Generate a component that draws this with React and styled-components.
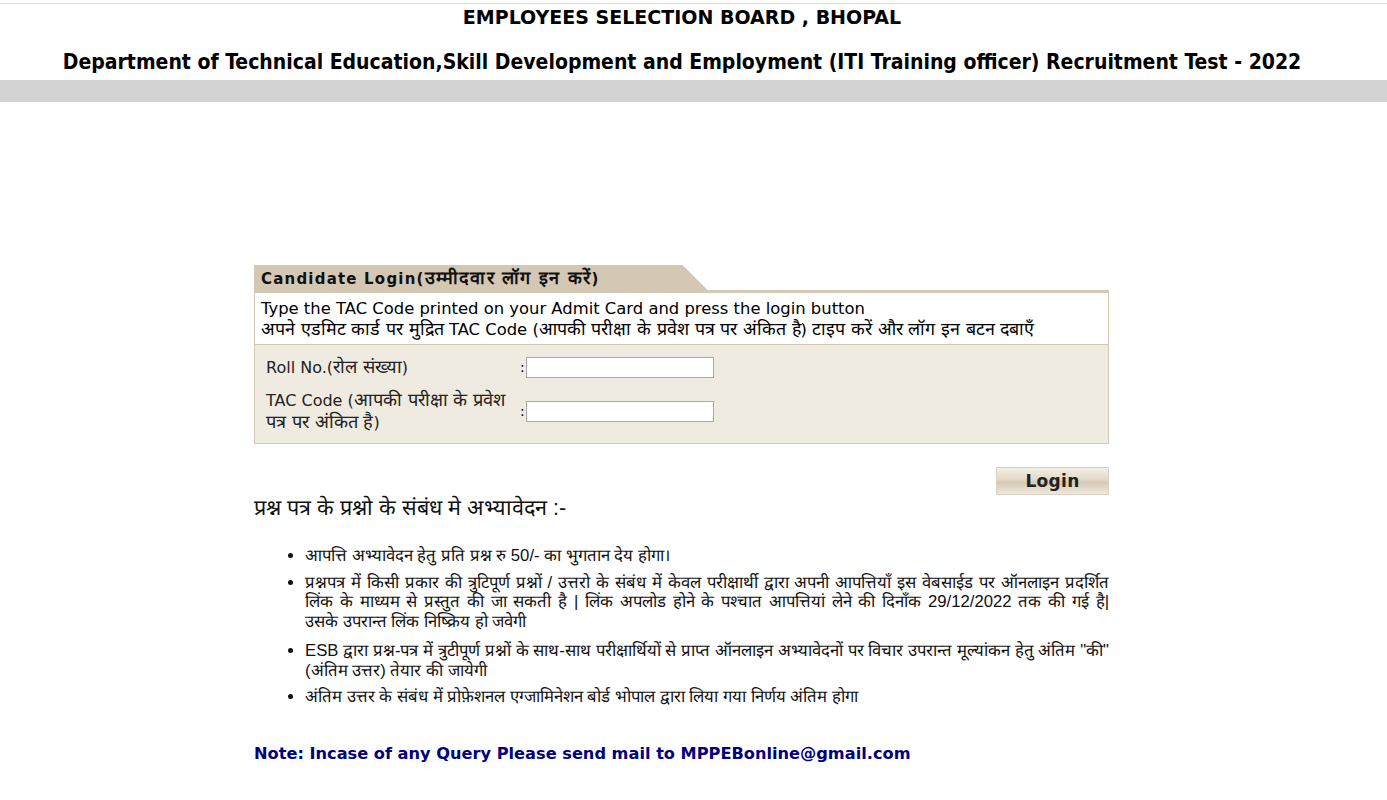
import styled, { createGlobalStyle } from "styled-components";

const Global = createGlobalStyle`
  body {
    margin: 0;
    background: #fff;
    font-family: "DejaVu Sans", Verdana, sans-serif;
    color: #000;
  }
`;

const Header = styled.div`
  margin-top: 3px;
  border-top: 1px solid #dcdcdc;
  padding-right: 23px;
  text-align: center;
  font-weight: bold;
`;

const BoardTitle = styled.div`
  font-family: "DejaVu Sans", Verdana, sans-serif;
  font-size: 19px;
  line-height: 22px;
  padding-top: 2px;
`;

const TestTitle = styled.div`
  font-family: "DejaVu Sans Condensed", Tahoma, sans-serif;
  font-size: 21px;
  line-height: 24px;
  margin-top: 22px;
  padding-bottom: 6px;
`;

const GreyBar = styled.div`
  height: 22px;
  background: #d3d3d3;
`;

const Main = styled.div`
  width: 855px;
  margin: 163px 0 0 254px;
`;

const Hi = styled.span`
  font-size: ${(p) => p.$scale || 1.09}em;
`;

const Tab = styled.div`
  display: flex;
  height: 25px;
`;

const TabLabel = styled.div`
  background: #d4c8b4;
  width: 428px;
  padding-left: 7px;
  box-sizing: border-box;
  font-size: 15px;
  font-weight: bold;
  letter-spacing: 1.2px;
  line-height: 25px;
  color: #111;
  white-space: nowrap;
`;

const TabSlant = styled.div`
  width: 25px;
  background: linear-gradient(to top right, #d4c8b4 50%, transparent 51%);
`;

const Panel = styled.div`
  border: 1px solid #d4c8b4;
  border-top: 3px solid #d4c8b4;
`;

const Intro = styled.div`
  background: #fff;
  padding: 6px 6px 4px;
  font-size: 16.4px;
  line-height: 20px;
  border-bottom: 1px solid #d4c8b4;
`;

const Form = styled.div`
  background: #f0ebe0;
  padding: 7px 11px 10px;
  display: grid;
  grid-template-columns: 254px 1fr;
  row-gap: 7px;
`;

const Label = styled.div`
  font-size: 16px;
  line-height: 21px;
  color: #222;
  display: flex;
  align-items: center;
  min-height: 30px;
`;

const Field = styled.div`
  display: flex;
  align-items: center;
  font-size: 14px;
  gap: 1px;
`;

const Input = styled.input`
  width: 188px;
  height: 21px;
  box-sizing: border-box;
  border: 1px solid #a9a9a9;
  background: #fff;
  margin: 0;
`;

const ButtonRow = styled.div`
  display: flex;
  justify-content: flex-end;
  margin-top: 23px;
`;

const LoginButton = styled.button`
  width: 113px;
  height: 28px;
  border: 1px solid #d8d0c0;
  background: linear-gradient(to bottom, #f3efe6 0%, #e2d8c6 45%, #d6cab4 55%, #eee8dc 100%);
  font-family: "DejaVu Sans", Verdana, sans-serif;
  font-size: 17px;
  font-weight: bold;
  letter-spacing: 0.3px;
  color: #222;
  padding: 0;
`;

const NoticeTitle = styled.div`
  font-family: "Liberation Sans", Arial, sans-serif;
  font-size: 21.6px;
  margin-top: -3px;
  color: #111;
`;

const NoticeList = styled.ul`
  margin: 25px 0 0;
  padding-left: 51px;
  font-family: "Liberation Sans", Arial, sans-serif;
  font-size: 16.7px;
  line-height: 19.5px;
  color: #111;
`;

const Item = styled.li`
  text-align: justify;
  margin-bottom: ${(p) => (p.$gap ? "10px" : "7px")};
`;

// a full line of a justified paragraph, kept at the same break as the original page
const FullLine = styled.span`
  display: block;
  text-align: justify;
  text-align-last: justify;
`;

const Note = styled.div`
  margin-top: 37px;
  font-family: "DejaVu Sans", Tahoma, sans-serif;
  font-weight: bold;
  font-size: 16.2px;
  color: #000080;
`;

const items = [
  { lines: ["आपत्ति अभ्यावेदन हेतु प्रति प्रश्न रु 50/- का भुगतान देय होगा।"] },
  {
    lines: [
      "प्रश्नपत्र में किसी प्रकार की त्रुटिपूर्ण प्रश्नों / उत्तरो के संबंध में केवल परीक्षार्थी द्वारा अपनी आपत्तियाँ इस वेबसाईड पर ऑनलाइन प्रदर्शित",
      "लिंक के माध्यम से प्रस्तुत की जा सकती है | लिंक अपलोड होने के पश्चात आपत्तियां लेने की दिनाँक 29/12/2022 तक की गई है|",
      "उसके उपरान्त लिंक निष्क्रिय हो जवेगी",
    ],
    gap: true,
  },
  {
    lines: [
      'ESB द्वारा प्रश्न-पत्र में त्रुटीपूर्ण प्रश्नों के साथ-साथ परीक्षार्थियों से प्राप्त ऑनलाइन अभ्यावेदनों पर विचार उपरान्त मूल्यांकन हेतु अंतिम "की" (अंतिम उत्तर) तेयार की जायेगी',
    ],
  },
  { lines: ["अंतिम उत्तर के संबंध में प्रोफ़ेशनल एग्जामिनेशन बोर्ड भोपाल द्वारा लिया गया निर्णय अंतिम होगा"] },
];

export default function App() {
  return (
    <>
      <Global />
      <Header>
        <BoardTitle>EMPLOYEES SELECTION BOARD , BHOPAL</BoardTitle>
        <TestTitle>
          Department of Technical Education,Skill Development and Employment (ITI Training officer) Recruitment Test - 2022
        </TestTitle>
      </Header>
      <GreyBar />
      <Main>
        <Tab>
          <TabLabel>
            Candidate Login(<Hi $scale={1.2}>उम्मीदवार लॉग इन करें</Hi>)
          </TabLabel>
          <TabSlant />
        </Tab>
        <Panel>
          <Intro>
            Type the TAC Code printed on your Admit Card and press the login button
            <br />
            <Hi>अपने एडमिट कार्ड पर मुद्रित</Hi> TAC Code (<Hi>आपकी परीक्षा के प्रवेश पत्र पर अंकित है</Hi>){" "}
            <Hi>टाइप करें और लॉग इन बटन दबाएँ</Hi>
          </Intro>
          <Form>
            <Label>
              <span>
                Roll No.(<Hi $scale={1.14}>रोल संख्या</Hi>)
              </span>
            </Label>
            <Field>
              :<Input type="text" />
            </Field>
            <Label>
              <span>
                TAC Code (<Hi $scale={1.14}>आपकी परीक्षा के प्रवेश</Hi>
                <br />
                <Hi $scale={1.14}>पत्र पर अंकित है</Hi>)
              </span>
            </Label>
            <Field>
              :<Input type="text" />
            </Field>
          </Form>
        </Panel>
        <ButtonRow>
          <LoginButton>Login</LoginButton>
        </ButtonRow>
        <NoticeTitle>प्रश्न पत्र के प्रश्नो के संबंध मे अभ्यावेदन :-</NoticeTitle>
        <NoticeList>
          {items.map((it, i) => (
            <Item key={i} $gap={it.gap}>
              {it.lines.map((line, j) =>
                j < it.lines.length - 1 ? <FullLine key={j}>{line}</FullLine> : <span key={j}>{line}</span>
              )}
            </Item>
          ))}
        </NoticeList>
        <Note>Note: Incase of any Query Please send mail to MPPEBonline@gmail.com</Note>
      </Main>
    </>
  );
}
